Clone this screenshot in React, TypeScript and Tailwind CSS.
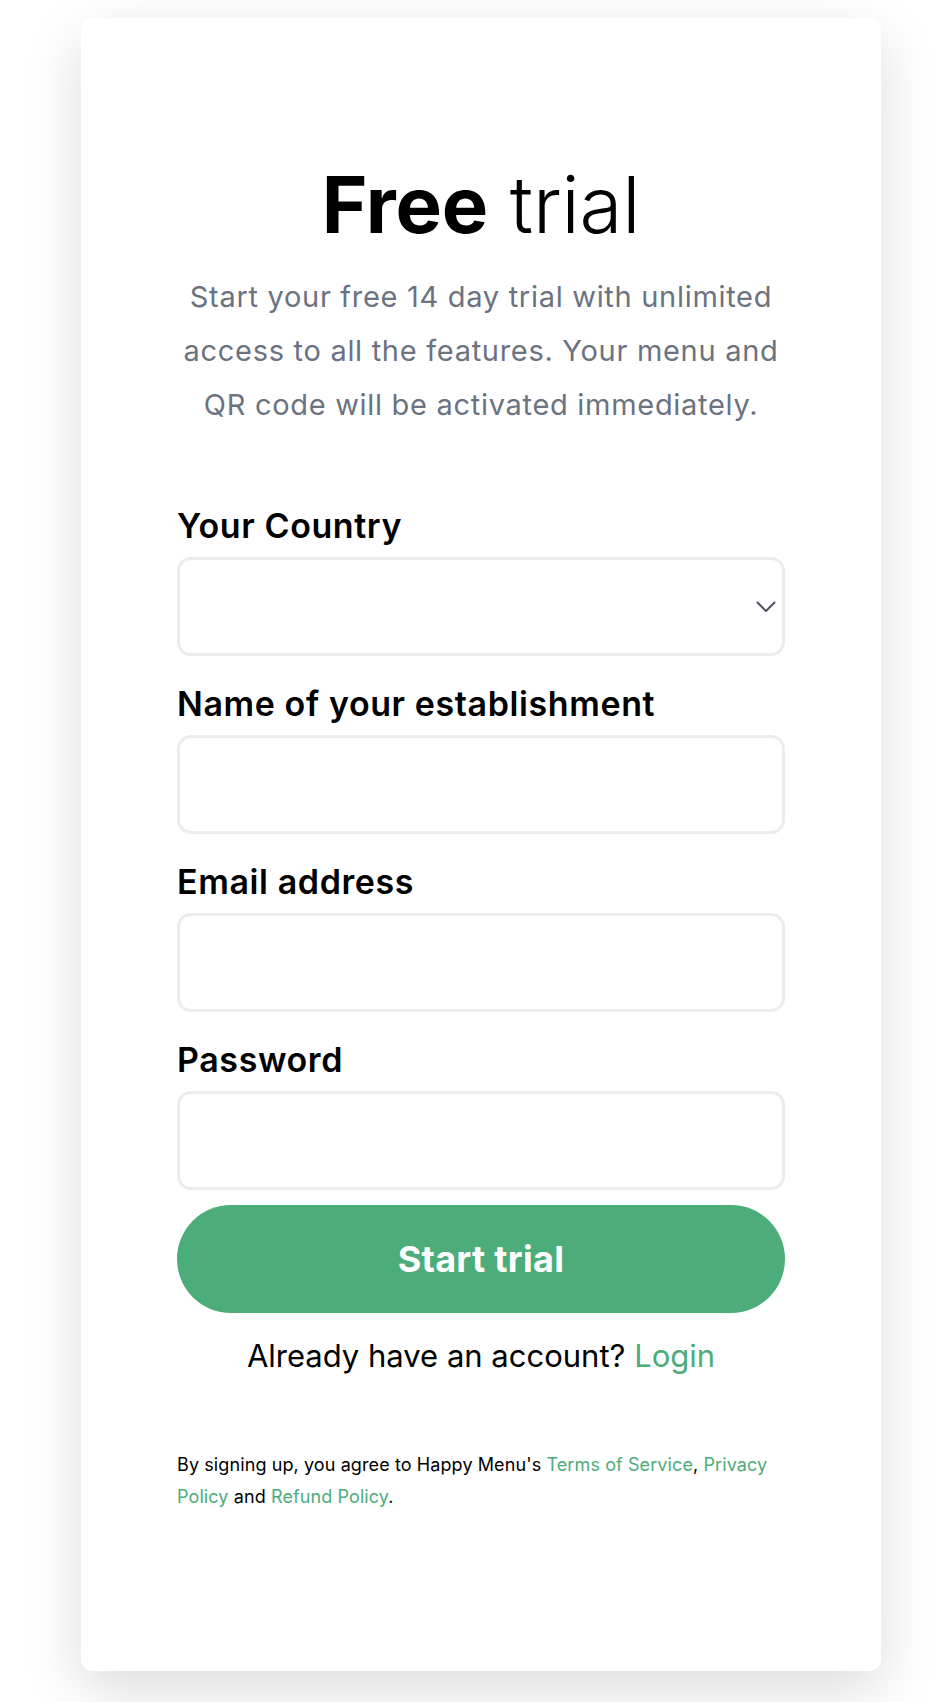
const GREEN = 'text-[#4cad7a]'

function Field({ label, select, first }: { label: string; select?: boolean; first?: boolean }) {
  return (
    <div className={first ? '' : 'mt-[30px]'}>
      <label className="block text-[34px] leading-[36px] font-semibold tracking-[0.6px] text-black">{label}</label>
      <div className="relative mt-[13px] h-[99px] rounded-[14px] border-[3px] border-[#ececec] bg-white">
        {select && (
          <svg
            className="absolute right-[6px] top-1/2 -translate-y-1/2 text-[#4b5563]"
            width="20"
            height="12"
            viewBox="0 0 20 12"
            fill="none"
          >
            <path d="M1.5 1.5l8.5 8.5 8.5-8.5" stroke="currentColor" strokeWidth="2" strokeLinecap="round" strokeLinejoin="round" />
          </svg>
        )}
      </div>
    </div>
  )
}

export default function App() {
  return (
    <div className="min-h-[1702px] bg-white pt-[18px] font-['Inter',sans-serif]">
      <div className="ml-[81px] h-[1653px] w-[800px] rounded-[12px] bg-white px-[96px] pt-[148px] shadow-[0_20px_60px_rgba(0,0,0,0.14)]">
        <h1 className="text-center text-[78px] leading-none tracking-[-0.2px] text-black">
          <span className="font-bold">Free</span> <span className="font-light">trial</span>
        </h1>
        <p className="mt-[26px] text-center text-[29px] leading-[54px] tracking-[0.7px] text-[#6b7280]">
          <span className="block">Start your free 14 day trial with unlimited</span>
          <span className="block">access to all the features. Your menu and</span>
          <span className="block">QR code will be activated immediately.</span>
        </p>

        <form className="mt-[76px]">
          <Field label="Your Country" select first />
          <Field label="Name of your establishment" />
          <Field label="Email address" />
          <Field label="Password" />

          <button
            type="button"
            className="mt-[15px] h-[108px] w-full rounded-full bg-[#4cad7a] text-[36px] font-bold tracking-[0.3px] text-white"
          >
            Start trial
          </button>
        </form>

        <p className="mt-[23px] text-center text-[31px] leading-[40px] text-black">
          Already have an account? <span className={GREEN}>Login</span>
        </p>

        <p className="mt-[73px] text-[18px] leading-[32px] tracking-[0.1px] text-black">
          By signing up, you agree to Happy Menu's <span className={GREEN}>Terms of Service</span>,{' '}
          <span className={GREEN}>Privacy</span> <span className={GREEN}>Policy</span> and{' '}
          <span className={GREEN}>Refund Policy</span>.
        </p>
      </div>
    </div>
  )
}
